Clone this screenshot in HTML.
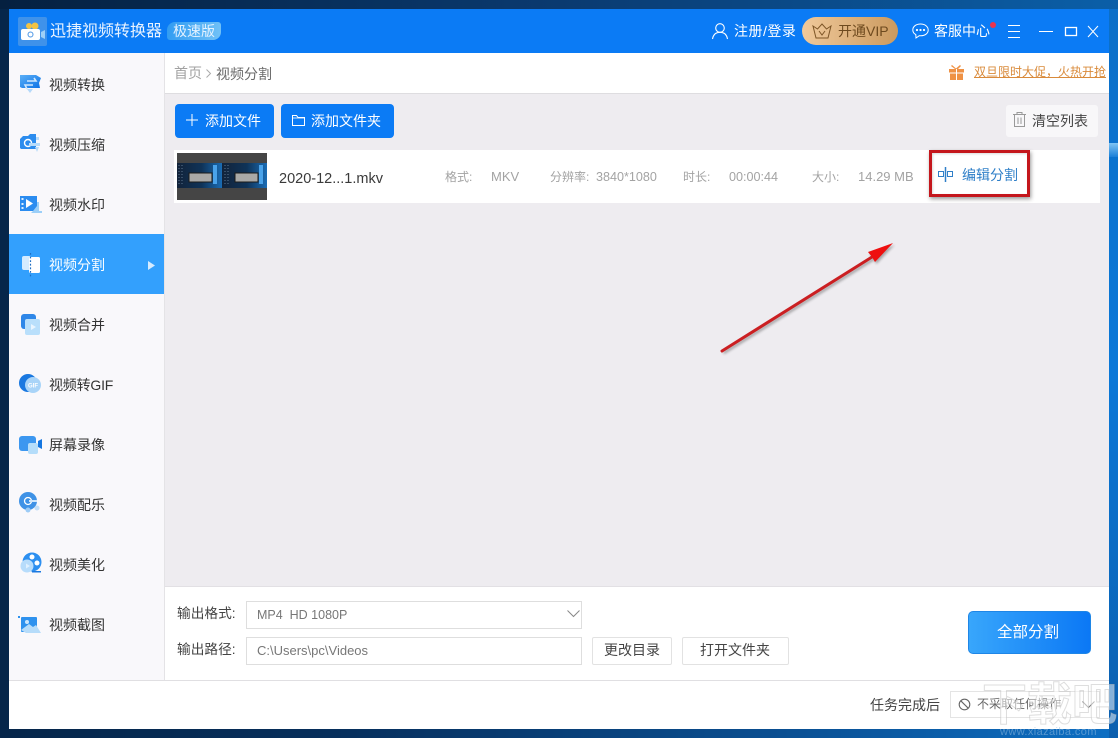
<!DOCTYPE html>
<html><head><meta charset="utf-8">
<style>
*{box-sizing:border-box;margin:0;padding:0}
html,body{width:1118px;height:738px;overflow:hidden}
body{position:relative;font-family:"Liberation Sans","Noto Sans CJK SC",sans-serif;background:linear-gradient(90deg,#06264a 0,#072f5c 30%,#0a4f92 70%,#0d6fc4 100%)}
.a{position:absolute;white-space:nowrap}
.t{line-height:20px;height:20px}
svg{position:absolute;overflow:visible}
.nav{font-size:14px;color:#333;left:49px}
.g{font-size:12px;color:#a3a3a3}
.btn{background:#0b7bf5;border-radius:4px;color:#fff;font-size:14px}
.box{background:#fff;border:1px solid #dedede;font-size:13px;color:#777}
</style></head><body>
<div class="a" style="left:0;top:0;width:1118px;height:9px;background:linear-gradient(90deg,#052040,#0a3a70 50%,#0b5fa8)"></div>
<div class="a" style="left:1109px;top:9px;width:9px;height:729px;background:linear-gradient(180deg,#0b6fc8,#0a78d8 50%,#0b5fae)"></div>
<div class="a" style="left:1109px;top:143px;width:9px;height:14px;background:linear-gradient(180deg,#7fc4f4,#1a80d8)"></div>

<div class="a" style="left:9px;top:9px;width:1100px;height:720px;background:#fff"></div>
<div class="a" style="left:9px;top:9px;width:1100px;height:44px;background:#0b7bf5"></div>

<!-- logo -->
<div class="a" style="left:18px;top:17px;width:29px;height:29px;background:#3f92ea;border-radius:2px"></div>
<svg style="left:18px;top:17px" width="29" height="29" viewBox="0 0 29 29"><circle cx="11" cy="9" r="3" fill="#f3c344"/><circle cx="17" cy="9" r="3.5" fill="#f3c344"/><rect x="3" y="12" width="19" height="11" rx="2" fill="#fff"/><path d="M23 15l4-2v9l-4-2z" fill="#9fd0f7"/><circle cx="12.500" cy="17.500" r="2.500" fill="none" stroke="#4a95e5"/></svg>
<div class="a" style="left:50px;top:20px;font-size:16px;line-height:24px;color:#e9f3ff">迅捷视频转换器</div>
<div class="a" style="left:167px;top:22px;width:54px;height:18px;background:linear-gradient(100deg,#2f9bf2,#72c2f7);border-radius:8px 3px 8px 3px"></div>
<div class="a" style="left:173px;top:22px;font-size:14px;line-height:18px;color:#e4f2ff">极速版</div>

<!-- header right -->
<svg style="left:711px;top:22px" width="18" height="18" viewBox="0 0 18 18" fill="none" stroke="#fff" stroke-width="1.100"><circle cx="9" cy="6" r="4.300"/><path d="M1.500 17c.8-4.500 3.500-6.700 7.500-6.700s6.700 2.200 7.500 6.700"/></svg>
<div class="a t" style="left:734px;top:21px;font-size:14px;letter-spacing:.5px;color:#fff">注册/登录</div>
<div class="a" style="left:802px;top:17px;width:96px;height:28px;border-radius:14px;background:linear-gradient(90deg,#f0c99b,#cb9a5f)"></div>
<svg style="left:812px;top:23px" width="20" height="17" viewBox="0 0 20 17" fill="none" stroke="#7d5526" stroke-width="1"><path d="M1 3l4.500 3L10 1l4.500 5L19 3l-3 12H4z"/><path d="M7 8l3 4 3-4"/></svg>
<div class="a t" style="left:838px;top:21px;font-size:14px;color:#6e4a1f">开通VIP</div>
<svg style="left:912px;top:23px" width="17" height="16" viewBox="0 0 17 16" fill="none" stroke="#fff" stroke-width="1"><path d="M8.500 1C4 1 .8 3.500.8 7c0 2 1.200 3.600 3 4.600L4 15l3.300-2.300c.4.100.8.100 1.200.1 4.500 0 7.700-2.400 7.700-5.800S13 1 8.500 1z"/><circle cx="5" cy="7" r=".6" fill="#fff"/><circle cx="8.500" cy="7" r=".6" fill="#fff"/><circle cx="12" cy="7" r=".6" fill="#fff"/></svg>
<div class="a t" style="left:934px;top:21px;font-size:14px;color:#fff">客服中心</div>
<div class="a" style="left:990px;top:22px;width:6px;height:6px;border-radius:50%;background:#e8344e"></div>
<svg style="left:1007px;top:24px" width="92" height="16" viewBox="0 0 92 16" fill="none" stroke="#fff" stroke-width="1"><path d="M1 1.500h12M1 7.500h12M1 13.500h12"/><path d="M32 7.500h14"/><rect x="58.500" y="3.500" width="11" height="8" stroke-width="1.300"/><path d="M81 2l10 11M91 2L81 13"/></svg>

<!-- sidebar -->
<div class="a" style="left:9px;top:53px;width:156px;height:627px;background:#f9f8fb;border-right:1px solid #e4e3e6"></div>
<div class="a" style="left:9px;top:234px;width:155px;height:60px;background:#33a0fd"></div>
<svg style="left:148px;top:261px" width="7" height="9"><path d="M0 0l7 4.500L0 9z" fill="#d5ebff"/></svg>

<svg style="left:18px;top:72px" width="24" height="24" viewBox="0 0 24 24"><defs><linearGradient id="b1" x1="0" y1="0" x2="1" y2="1"><stop offset="0" stop-color="#5cb0f7"/><stop offset="1" stop-color="#0d72e6"/></linearGradient></defs><path d="M2 3h16l5 3-2 5 1 5H4l-2-1z" fill="url(#b1)"/><path d="M9 9h9l-2-3M15 13H7l2 4" stroke="#cfe7fd" stroke-width="1.600" fill="none"/><path d="M9 17h6l-3 4z" fill="#b5d9fa"/></svg>
<svg style="left:18px;top:132px" width="24" height="24" viewBox="0 0 24 24"><path d="M2 7l3-3h5l2-2h6v15H3l-1-1z" fill="#2c8cee"/><circle cx="10" cy="11" r="3.500" fill="none" stroke="#fff" stroke-width="1.400"/><rect x="11" y="11" width="11" height="3" fill="#b7dbfa"/><rect x="18" y="5" width="3" height="3" fill="#b7dbfa"/><path d="M17 15h4l-2 5z" fill="#b7dbfa"/></svg>
<svg style="left:19px;top:192px" width="24" height="24" viewBox="0 0 24 24"><rect x="1" y="4" width="17" height="15" fill="#2b8cf0"/><path d="M7 7v9l7-4.500z" fill="#fff"/><rect x="2.500" y="6" width="2" height="2" fill="#dcefff"/><rect x="2.500" y="11" width="2" height="2" fill="#dcefff"/><rect x="2.500" y="15" width="2" height="2" fill="#dcefff"/><path d="M14 19l4-5v-4h2v9h3v2H12z" fill="#9ccff8"/></svg>
<svg style="left:21px;top:252px" width="20" height="26" viewBox="0 0 20 26"><rect x="1" y="4" width="9" height="14" rx="2" fill="#d4ebff"/><rect x="8" y="5" width="11" height="16" rx="1.500" fill="#fff"/><path d="M9.500 1v24" stroke="#1f6fc4" stroke-width="1.200" stroke-dasharray="1.800 1.800"/></svg>
<svg style="left:20px;top:313px" width="21" height="23" viewBox="0 0 21 23"><rect x="1" y="1" width="15" height="15" rx="3" fill="#2f87e8"/><rect x="5" y="6" width="15" height="16" rx="2" fill="#b9dffb"/><path d="M11 11v6l5-3z" fill="#e9f5ff"/></svg>
<svg style="left:19px;top:374px" width="23" height="20" viewBox="0 0 23 20"><circle cx="9" cy="9" r="9" fill="#1a78e0"/><circle cx="14" cy="11" r="8" fill="#a9d4f8"/><text x="14" y="13.500" font-size="6" font-weight="700" fill="#fff" text-anchor="middle" font-family="Liberation Sans">GIF</text></svg>
<svg style="left:19px;top:435px" width="24" height="20" viewBox="0 0 24 20"><rect x="0" y="1" width="17" height="15" rx="3" fill="#3c97f0"/><rect x="9" y="8" width="10" height="11" rx="2" fill="#b5ddfa"/><path d="M19 6l4-2v10l-4-2z" fill="#1576e0"/></svg>
<svg style="left:19px;top:492px" width="22" height="24" viewBox="0 0 22 24"><circle cx="9" cy="9" r="9" fill="#3f92e6"/><circle cx="9" cy="9" r="3.500" fill="none" stroke="#fff" stroke-width="1.300"/><rect x="10" y="8" width="8" height="2" fill="#cfe6fb"/><circle cx="9" cy="18" r="2.500" fill="#9ccbf6"/><circle cx="18" cy="16" r="2.500" fill="#c3dff8"/></svg>
<svg style="left:20px;top:552px" width="22" height="22" viewBox="0 0 22 22"><circle cx="12" cy="10" r="9.500" fill="#2c8ff0"/><circle cx="12" cy="5" r="2.500" fill="#fff"/><circle cx="17" cy="11" r="2.500" fill="#fff"/><path d="M12 19h9v1.500h-9z" fill="#1a78e0"/><circle cx="7" cy="14" r="6.500" fill="#b7dcfb"/><path d="M6 11.500v5l4-2.500z" fill="#dff0ff"/></svg>
<svg style="left:18px;top:615px" width="23" height="20" viewBox="0 0 23 20"><rect x="3" y="2" width="16" height="15" rx="1" fill="#2f92ee"/><circle cx="9" cy="7" r="2" fill="#cbe6fc"/><path d="M3 15l8-6 4 3 3-2 5 8H8z" fill="#b6dcfa"/><path d="M0 1h2v2H0z" fill="#2f92ee"/></svg>

<div class="a t nav" style="top:75px">视频转换</div>
<div class="a t nav" style="top:135px">视频压缩</div>
<div class="a t nav" style="top:195px">视频水印</div>
<div class="a t nav" style="top:255px;color:#fff">视频分割</div>
<div class="a t nav" style="top:315px">视频合并</div>
<div class="a t nav" style="top:375px;letter-spacing:-.2px">视频转GIF</div>
<div class="a t nav" style="top:435px">屏幕录像</div>
<div class="a t nav" style="top:495px">视频配乐</div>
<div class="a t nav" style="top:555px">视频美化</div>
<div class="a t nav" style="top:615px">视频截图</div>

<!-- breadcrumb -->
<div class="a" style="left:165px;top:53px;width:944px;height:41px;background:#fff;border-bottom:1px solid #dedde0"></div>
<div class="a t" style="left:174px;top:63px;font-size:14px;color:#a2a2a2">首页</div>
<svg style="left:206px;top:69px" width="6" height="9" fill="none" stroke="#aaa"><path d="M.5.500l4 4-4 4"/></svg>
<div class="a t" style="left:216px;top:64px;font-size:14px;color:#6a6a6a">视频分割</div>
<svg style="left:949px;top:65px" width="15" height="15" viewBox="0 0 15 15"><path d="M0 4h15v3.500H0zM1 8.500h13V15H1z" fill="#ef9245"/><path d="M7 4h1v11H7z" fill="#fff"/><path d="M3 0l4 3.500L11 0l1 1-3 3H6L2 1z" fill="#ef9245"/></svg>
<div class="a t" style="left:974px;top:62px;font-size:12px;color:#d98a3a;text-decoration:underline">双旦限时大促，火热开抢</div>

<!-- content -->
<div class="a" style="left:165px;top:94px;width:944px;height:492px;background:#eeecf0"></div>
<div class="a btn" style="left:175px;top:104px;width:99px;height:34px"></div>
<svg style="left:186px;top:114px" width="12" height="12" stroke="#fff" stroke-width="1"><path d="M6 0v12M0 6h12"/></svg>
<div class="a t" style="left:205px;top:111px;font-size:14px;color:#fff">添加文件</div>
<div class="a btn" style="left:281px;top:104px;width:113px;height:34px"></div>
<svg style="left:292px;top:114px" width="13" height="12" fill="none" stroke="#fff"><path d="M.5 1.500h4l1.500 2h6.500v8H.5z"/><path d="M.5 4h12" stroke-width=".8"/></svg>
<div class="a t" style="left:311px;top:111px;font-size:14px;color:#fff">添加文件夹</div>
<div class="a" style="left:1006px;top:105px;width:92px;height:32px;background:#f8f7f9;border-radius:3px"></div>
<svg style="left:1013px;top:112px" width="13" height="15" fill="none" stroke="#999"><path d="M0 2.500h13M4 2V.5h5V2M1.500 3v11.500h10V3M5 5.500v6.500M8 5.500v6.500"/></svg>
<div class="a t" style="left:1032px;top:111px;font-size:14px;color:#444">清空列表</div>

<div class="a" style="left:174px;top:150px;width:926px;height:53px;background:#fff"></div>
<svg style="left:177px;top:153px" width="90" height="47" viewBox="0 0 90 47"><defs><linearGradient id="th" x1="0" y1="0" x2="1" y2="0"><stop offset="0" stop-color="#12233a"/><stop offset=".55" stop-color="#0f3358"/><stop offset="1" stop-color="#1a6cb4"/></linearGradient></defs><rect width="90" height="47" fill="#454545"/><rect x="0" y="10" width="45" height="25" fill="url(#th)"/><rect x="45" y="10" width="45" height="25" fill="url(#th)"/><path d="M2 12v20M5 12v20M48 12v20M51 12v20" stroke="#5d7690" stroke-width="1" stroke-dasharray="1 2"/><rect x="36" y="12" width="4" height="19" fill="#4aa3ea"/><rect x="82" y="12" width="4" height="19" fill="#4aa3ea"/><rect x="12" y="20" width="23" height="9" fill="#a9a9a7" stroke="#1a1a1a"/><rect x="58" y="20" width="23" height="9" fill="#a9a9a7" stroke="#1a1a1a"/></svg>
<div class="a t" style="left:279px;top:169px;font-size:14.500px;color:#3a3a3a">2020-12...1.mkv</div>
<div class="a t g" style="left:445px;top:167px">格式:</div>
<div class="a t g" style="left:491px;top:167px;font-size:13px">MKV</div>
<div class="a t g" style="left:550px;top:167px">分辨率:</div>
<div class="a t g" style="left:596px;top:167px;font-size:12.600px">3840*1080</div>
<div class="a t g" style="left:683px;top:167px">时长:</div>
<div class="a t g" style="left:729px;top:167px;font-size:12.600px">00:00:44</div>
<div class="a t g" style="left:812px;top:167px">大小:</div>
<div class="a t g" style="left:858px;top:167px;font-size:13px">14.29 MB</div>
<svg style="left:937px;top:166px" width="18" height="18" fill="none" stroke="#2f7fc8"><rect x="1.500" y="5.500" width="5" height="5"/><rect x="10.500" y="5.500" width="5" height="5"/><path d="M8.500 1v15" stroke-width="1.500"/></svg>
<div class="a t" style="left:962px;top:165px;font-size:14px;color:#2f7fc8">编辑分割</div>
<div class="a" style="left:929px;top:150px;width:101px;height:47px;border:3.500px solid #c4161c;box-shadow:1px 2px 4px rgba(0,0,0,.4),inset 1px 1px 2px rgba(0,0,0,.15)"></div>

<!-- arrow -->
<svg style="left:700px;top:225px" width="210" height="135" viewBox="0 0 210 135"><defs><filter id="sh" x="-20%" y="-20%" width="140%" height="140%"><feGaussianBlur stdDeviation="1.200"/></filter></defs><g transform="translate(1.500 2)" opacity=".35" filter="url(#sh)"><path d="M22 126l150-94" stroke="#222" stroke-width="3" fill="none"/><path d="M193 18L168 27l4 5 3 5z" fill="#222"/></g><path d="M22 126l150-94" stroke="#cb1f22" stroke-width="3" stroke-linecap="round" fill="none"/><path d="M193 18L168 27l4 5 3 5z" fill="#ee0f0f"/></svg>

<!-- bottom panel -->
<div class="a" style="left:165px;top:586px;width:944px;height:1px;background:#e2e0e4"></div>
<div class="a t" style="left:177px;top:604px;font-size:13.700px;color:#444">输出格式:</div>
<div class="a box" style="left:246px;top:601px;width:336px;height:28px;padding:3px 0 0 10px;line-height:20px;font-size:12.500px">MP4&nbsp; HD 1080P</div>
<svg style="left:567px;top:610px" width="13" height="8" fill="none" stroke="#888"><path d="M.5.500l6 6 6-6"/></svg>
<div class="a t" style="left:177px;top:640px;font-size:13.700px;color:#444">输出路径:</div>
<div class="a box" style="left:246px;top:637px;width:336px;height:28px;padding:3px 0 0 10px;line-height:20px">C:\Users\pc\Videos</div>
<div class="a" style="left:592px;top:637px;width:80px;height:28px;border:1px solid #e2e2e2;border-radius:2px"></div>
<div class="a t" style="left:604px;top:640px;font-size:14px;color:#444">更改目录</div>
<div class="a" style="left:682px;top:637px;width:107px;height:28px;border:1px solid #e2e2e2;border-radius:2px"></div>
<div class="a t" style="left:700px;top:640px;font-size:14px;color:#444">打开文件夹</div>
<div class="a" style="left:968px;top:611px;width:123px;height:43px;border-radius:5px;background:linear-gradient(90deg,#38a6fb,#0b78f5);border:1px solid #1f86e6"></div>
<div class="a t" style="left:997px;top:623px;font-size:15.500px;color:#fff">全部分割</div>

<div class="a" style="left:9px;top:680px;width:1100px;height:1px;background:#e0dfe2"></div>
<div class="a t" style="left:870px;top:695px;font-size:14px;color:#444">任务完成后</div>
<div class="a" style="left:950px;top:691px;width:150px;height:27px;border:1px solid #e4e4e4"></div>
<svg style="left:958px;top:698px" width="13" height="13" fill="none" stroke="#666" stroke-width="1.100"><circle cx="6.500" cy="6.500" r="5.300"/><path d="M2.800 2.800l7.400 7.400"/></svg>
<div class="a t" style="left:977px;top:694px;font-size:12px;color:#666">不采取任何操作</div>
<svg style="left:1082px;top:701px" width="13" height="8" fill="none" stroke="#777"><path d="M.5.500l6 6 6-6"/></svg>

<!-- watermark -->
<div class="a" style="left:982px;top:678px;font-size:45px;line-height:54px;color:rgba(255,255,255,.5);-webkit-text-stroke:1px rgba(190,190,190,.5);font-weight:700">下载吧</div>
<div class="a" style="left:1000px;top:727px;font-size:11px;line-height:11px;color:rgba(150,190,225,.55);letter-spacing:.4px">www.xiazaiba.com</div>
</body></html>
